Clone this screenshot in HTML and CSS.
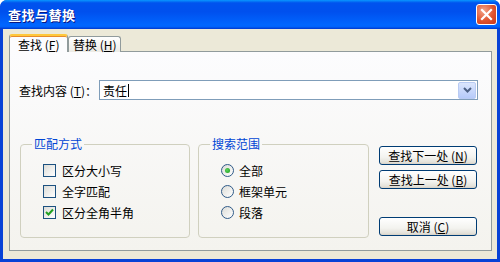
FILE: index.html
```html
<!DOCTYPE html>
<html lang="zh-CN">
  <head>
    <meta charset="UTF-8" />
    <title>查找与替换</title>
    <link rel="stylesheet" href="styles.css">
  </head>
  <body>
    <div class="window">
      <!-- Titelleiste -->
      <div class="titlebar">
        <span class="title">查找与替换</span>
        <span class="close">
          <svg width="13" height="13" viewBox="0 0 13 13">
            <path d="M2 2 L11 11 M11 2 L2 11" stroke="#fff" stroke-width="2.2" stroke-linecap="square" />
          </svg>
        </span>
      </div>

      <div class="frame">
        <div class="tabs">
          <div class="tab active">查找 (<u>F</u>)</div>
          <div class="tab">替换 (<u>H</u>)</div>
        </div>

        <div class="panel">
          <div class="search-row">
            <label class="search-label">查找内容 (<u>T</u>)：</label>
            <div class="combo">
              <span class="combo-text">责任<span class="caret"></span></span>
              <span class="combo-btn">
                <svg width="9" height="6" viewBox="0 0 9 6">
                  <path d="M1 1 L4.5 4.5 L8 1" fill="none" stroke="#4d6185" stroke-width="2" />
                </svg>
              </span>
            </div>
          </div>

          <div class="options">
            <fieldset class="group group-match">
              <legend>匹配方式</legend>
              <div class="option"><span class="check"></span>区分大小写</div>
              <div class="option"><span class="check"></span>全字匹配</div>
              <div class="option">
                <span class="check checked">
                  <svg width="9" height="9" viewBox="0 0 9 9">
                    <path d="M1 4 L3.5 6.5 L8 1.5" fill="none" stroke="#21a121" stroke-width="2" />
                  </svg>
                </span>区分全角半角
              </div>
            </fieldset>

            <fieldset class="group group-range">
              <legend>搜索范围</legend>
              <div class="option"><span class="radio checked"></span>全部</div>
              <div class="option"><span class="radio"></span>框架单元</div>
              <div class="option"><span class="radio"></span>段落</div>
            </fieldset>

            <div class="buttons">
              <button class="btn">查找下一处 (<u>N</u>)</button>
              <button class="btn">查找上一处 (<u>B</u>)</button>
              <button class="btn btn-cancel">取消 (<u>C</u>)</button>
            </div>
          </div>
        </div>
      </div>
    </div>
  </body>
</html>
```

FILE: styles.css
```css
html,
body {
  margin: 0;
  padding: 0;
}
body {
  font-family: "Noto Sans CJK SC", "DejaVu Sans", sans-serif;
  font-size: 12px;
  color: #000;
  background: #fff;
}
u {
  text-decoration: underline;
  text-underline-offset: 1px;
}
.window {
  width: 500px;
  height: 262px;
  box-sizing: border-box;
  display: flex;
  flex-direction: column;
  border-radius: 7px 7px 0 0;
  background: #0842d6;
  overflow: hidden;
}

/* ----- Titelleiste ----- */
.titlebar {
  height: 29px;
  flex: none;
  display: flex;
  align-items: center;
  justify-content: space-between;
  padding: 0 3px 0 8px;
  background: linear-gradient(
    to bottom,
    #0997ff 0%,
    #0053ee 10%,
    #0050ee 40%,
    #0066ff 86%,
    #0062fb 93%,
    #0043d8 97%,
    #003dd7 100%
  );
}
.title {
  color: #fff;
  font-weight: bold;
  font-size: 13px;
  text-shadow: 1px 1px #0a1883;
  letter-spacing: 0.5px;
}
.close {
  width: 19px;
  height: 19px;
  border: 1px solid #fff;
  border-radius: 3px;
  display: flex;
  align-items: center;
  justify-content: center;
  background: radial-gradient(circle at 35% 30%, #f3a58a, #e0542f 55%, #c8371a);
}

/* ----- Fensterinhalt ----- */
.frame {
  flex: 1;
  margin: 0 3px 3px;
  background: #ece9d8;
  padding: 4px 5px 8px 6px;
  display: flex;
  flex-direction: column;
}
.tabs {
  display: flex;
  align-items: flex-end;
  height: 19px;
  margin-bottom: -1px;
}
.tab {
  position: relative;
  z-index: 1;
  height: 15px;
  line-height: 15px;
  padding: 0 3px 0 4px;
  border: 1px solid #919b9c;
  border-bottom: none;
  border-radius: 3px 3px 0 0;
  background: linear-gradient(#fff, #ecebe5);
}
.tab.active {
  height: 16px;
  line-height: 17px;
  width: 46px;
  padding: 0 3px 0 8px;
  border-top: 2px solid #ffc83c;
  box-shadow: inset 0 1px #e68b2c;
  background: #fcfcfe;
}
.panel {
  flex: 1;
  border: 1px solid #919b9c;
  background: linear-gradient(#fcfcfe, #f4f3ee);
  padding: 28px 13px 0 9px;
  display: flex;
  flex-direction: column;
}
.search-row {
  display: flex;
  align-items: center;
  height: 20px;
}
.search-label {
  width: 80px;
  flex: none;
}
.combo {
  flex: 1;
  height: 20px;
  box-sizing: border-box;
  border: 1px solid #7f9db9;
  background: #fff;
  display: flex;
  align-items: center;
  justify-content: space-between;
  padding: 0 1px 0 3px;
}
.combo-text {
  display: flex;
  align-items: center;
}
.caret {
  width: 1px;
  height: 13px;
  background: #000;
  margin-left: 1px;
}
.combo-btn {
  width: 16px;
  height: 15px;
  border: 1px solid #b9cbf3;
  border-radius: 2px;
  background: linear-gradient(#dbe6fd, #b6cafa);
  display: flex;
  align-items: center;
  justify-content: center;
}

/* ----- Optionen ----- */
.options {
  display: flex;
  margin-top: 37px;
}
.group {
  margin: 0;
  box-sizing: border-box;
  height: 101px;
  border: 1px solid #d0d0bf;
  border-radius: 4px;
  padding: 9px 0 0 22px;
  min-width: 0;
}
.group legend {
  color: #0046d5;
  padding: 0 2px;
  margin-left: -11px;
  line-height: 14px;
}
.group-match {
  width: 170px;
  margin-left: 1px;
}
.group-range {
  width: 171px;
  margin-left: 8px;
}
.option {
  display: flex;
  align-items: center;
  height: 21px;
}
.check,
.radio {
  width: 13px;
  height: 13px;
  box-sizing: border-box;
  border: 1px solid #1c5180;
  margin-right: 6px;
  flex: none;
  display: flex;
  align-items: center;
  justify-content: center;
  background: linear-gradient(135deg, #dcdcd7, #fff);
}
.radio {
  border-radius: 50%;
  border-color: #2f5a88;
  margin-right: 5px;
}
.radio.checked::after {
  content: "";
  width: 5px;
  height: 5px;
  border-radius: 50%;
  background: radial-gradient(circle at 40% 40%, #5bd45b, #1a9a1a);
}
.buttons {
  display: flex;
  flex-direction: column;
  margin-left: 10px;
  padding-top: 9px;
}
.btn {
  width: 98px;
  height: 19px;
  box-sizing: border-box;
  padding: 0;
  font-family: inherit;
  font-size: 12px;
  line-height: 16px;
  color: #000;
  border: 1px solid #003c74;
  border-radius: 3px;
  background: linear-gradient(#fff, #f3f3ef 60%, #e3e1d9 90%, #d6d0c5);
  margin-bottom: 5px;
}
.btn-cancel {
  margin-top: 23px;
}
```
